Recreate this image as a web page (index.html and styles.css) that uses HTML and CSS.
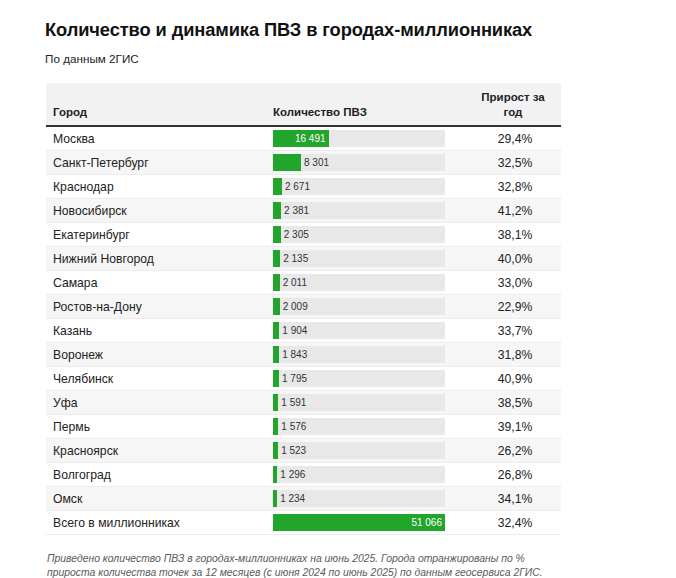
FILE: index.html
```html
<!DOCTYPE html>
<html lang="ru">
<head>
<meta charset="utf-8">
<link rel="stylesheet" href="styles.css">
</head>
<body>
<div class="page">
  <h1 class="title">Количество и динамика ПВЗ в городах-миллионниках</h1>
  <div class="subtitle">По данным 2ГИС</div>
  <div class="table">
    <div class="head">
      <div class="h-city">Город</div>
      <div class="h-count">Количество ПВЗ</div>
      <div class="h-growth">Прирост за<br>год</div>
    </div>
    <div class="row"><div class="city">Москва</div><div class="bar-cell"><div class="track"><div class="fill in" style="width:32.3%"><span>16 491</span></div></div></div><div class="growth">29,4%</div></div>
    <div class="row"><div class="city">Санкт-Петербург</div><div class="bar-cell"><div class="track"><div class="fill" style="width:16.3%"></div><span class="val">8 301</span></div></div><div class="growth">32,5%</div></div>
    <div class="row"><div class="city">Краснодар</div><div class="bar-cell"><div class="track"><div class="fill" style="width:5.2%"></div><span class="val">2 671</span></div></div><div class="growth">32,8%</div></div>
    <div class="row"><div class="city">Новосибирск</div><div class="bar-cell"><div class="track"><div class="fill" style="width:4.7%"></div><span class="val">2 381</span></div></div><div class="growth">41,2%</div></div>
    <div class="row"><div class="city">Екатеринбург</div><div class="bar-cell"><div class="track"><div class="fill" style="width:4.5%"></div><span class="val">2 305</span></div></div><div class="growth">38,1%</div></div>
    <div class="row"><div class="city">Нижний Новгород</div><div class="bar-cell"><div class="track"><div class="fill" style="width:4.2%"></div><span class="val">2 135</span></div></div><div class="growth">40,0%</div></div>
    <div class="row"><div class="city">Самара</div><div class="bar-cell"><div class="track"><div class="fill" style="width:3.9%"></div><span class="val">2 011</span></div></div><div class="growth">33,0%</div></div>
    <div class="row"><div class="city">Ростов-на-Дону</div><div class="bar-cell"><div class="track"><div class="fill" style="width:3.9%"></div><span class="val">2 009</span></div></div><div class="growth">22,9%</div></div>
    <div class="row"><div class="city">Казань</div><div class="bar-cell"><div class="track"><div class="fill" style="width:3.7%"></div><span class="val">1 904</span></div></div><div class="growth">33,7%</div></div>
    <div class="row"><div class="city">Воронеж</div><div class="bar-cell"><div class="track"><div class="fill" style="width:3.6%"></div><span class="val">1 843</span></div></div><div class="growth">31,8%</div></div>
    <div class="row"><div class="city">Челябинск</div><div class="bar-cell"><div class="track"><div class="fill" style="width:3.5%"></div><span class="val">1 795</span></div></div><div class="growth">40,9%</div></div>
    <div class="row"><div class="city">Уфа</div><div class="bar-cell"><div class="track"><div class="fill" style="width:3.1%"></div><span class="val">1 591</span></div></div><div class="growth">38,5%</div></div>
    <div class="row"><div class="city">Пермь</div><div class="bar-cell"><div class="track"><div class="fill" style="width:3.1%"></div><span class="val">1 576</span></div></div><div class="growth">39,1%</div></div>
    <div class="row"><div class="city">Красноярск</div><div class="bar-cell"><div class="track"><div class="fill" style="width:3.0%"></div><span class="val">1 523</span></div></div><div class="growth">26,2%</div></div>
    <div class="row"><div class="city">Волгоград</div><div class="bar-cell"><div class="track"><div class="fill" style="width:2.5%"></div><span class="val">1 296</span></div></div><div class="growth">26,8%</div></div>
    <div class="row"><div class="city">Омск</div><div class="bar-cell"><div class="track"><div class="fill" style="width:2.4%"></div><span class="val">1 234</span></div></div><div class="growth">34,1%</div></div>
    <div class="row total"><div class="city">Всего в миллионниках</div><div class="bar-cell"><div class="track"><div class="fill in" style="width:100%"><span>51 066</span></div></div></div><div class="growth">32,4%</div></div>
  </div>
  <p class="note">Приведено количество ПВЗ в городах-миллионниках на июнь 2025. Города отранжированы по %<br>прироста количества точек за 12 месяцев (с июня 2024 по июнь 2025) по данным геосервиса 2ГИС.</p>
</div>
</body>
</html>
```

FILE: styles.css
```css
* { box-sizing: border-box; }
html, body { margin: 0; padding: 0; background: #fff; }
body {
  font-family: "Liberation Sans", Arial, sans-serif;
  color: #222;
}
.page {
  width: 676px;
  height: 578px;
  padding: 19px 0 0 45px;
}
.title {
  margin: 0;
  font-size: 18.3px;
  line-height: 22px;
  font-weight: bold;
  color: #111;
  letter-spacing: -0.1px;
}
.subtitle {
  margin-top: 11px;
  font-size: 11.7px;
  line-height: 14px;
  color: #222;
}
.table {
  margin-top: 17px;
  margin-left: 1px;
  width: 515px;
}
.head {
  display: grid;
  grid-template-columns: 227px 192px 96px;
  align-items: end;
  background: #f2f2f2;
  border-bottom: 2px solid #333;
  height: 44px;
  padding-bottom: 5px;
  font-size: 11.5px;
  font-weight: bold;
  color: #222;
  line-height: 15px;
}
.h-city { padding-left: 7px; }
.h-count { padding-left: 0; }
.h-growth { text-align: center; }
.row {
  display: grid;
  grid-template-columns: 227px 192px 96px;
  align-items: center;
  height: 24px;
  border-bottom: 1px solid #ececec;
  font-size: 12.2px;
}
.row:nth-child(odd) { background: #f6f6f6; }
.row:nth-child(even) { background: #fff; }
.city { padding-left: 7px; }
.growth { text-align: center; padding-left: 4px; }
.bar-cell { padding-right: 20px; }
.track {
  position: relative;
  display: flex;
  align-items: center;
  height: 17px;
  background: #e8e8e8;
}
.fill {
  height: 100%;
  background: #22a52b;
  flex: none;
}
.fill.in {
  display: flex;
  align-items: center;
  justify-content: flex-end;
  padding-right: 3px;
  color: #fff;
  font-size: 10px;
}
.val {
  margin-left: 3px;
  font-size: 10px;
  color: #333;
}
.note {
  margin: 17px 0 0 2px;
  font-size: 10.4px;
  line-height: 14px;
  font-style: italic;
  color: #5a5a5a;
}
```
